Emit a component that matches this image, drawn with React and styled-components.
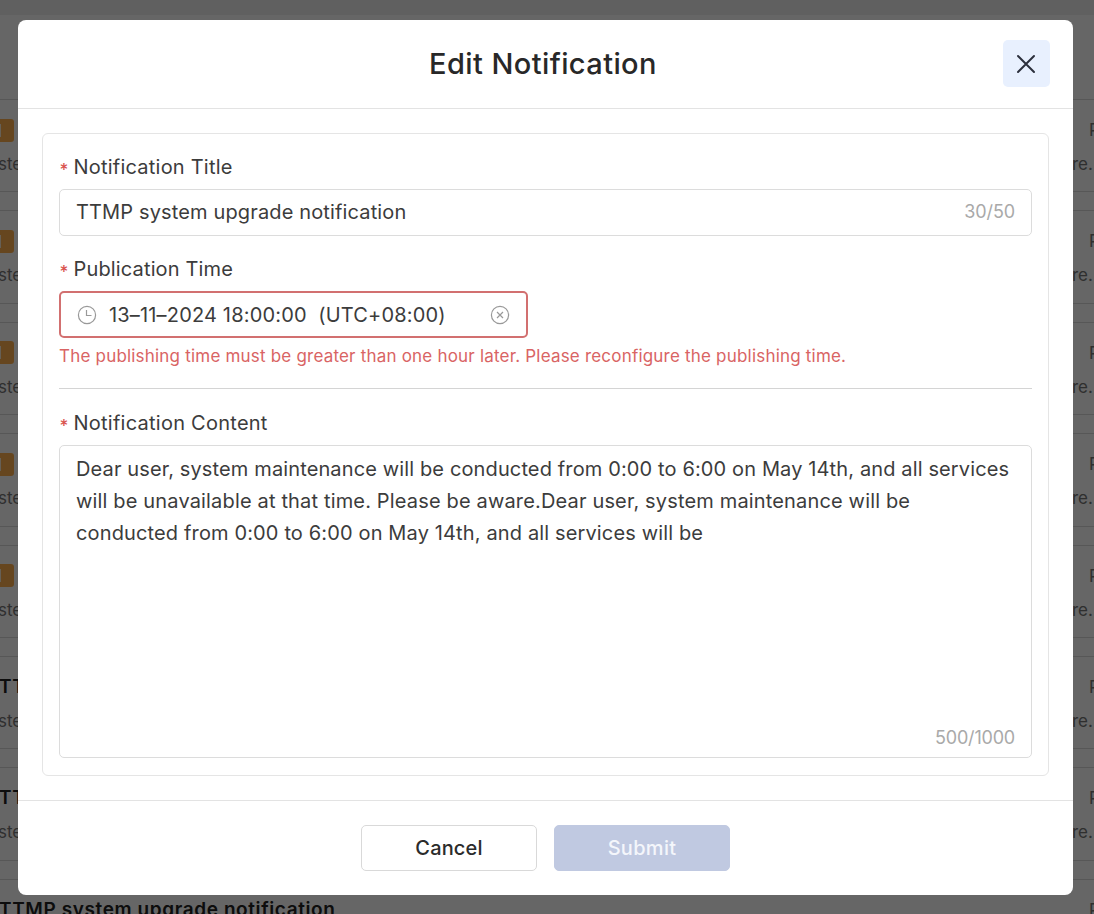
import React from "react";
import styled, { createGlobalStyle } from "styled-components";

const GlobalStyle = createGlobalStyle`
  *, *::before, *::after { box-sizing: border-box; }
  body {
    margin: 0;
    overflow: hidden;
    font-family: Inter, "Liberation Sans", sans-serif;
    font-weight: 400;
    color: #3c3c3c;
  }
  button, input, textarea { font-family: inherit; }
`;

const Page = styled.div`
  position: relative;
  width: 1094px;
  height: 914px;
  overflow: hidden;
  background: #fff;
`;

const TopBar = styled.div`
  height: 15px;
  background: #f0f0f0;
`;

const CardList = styled.div`
  display: flex;
  flex-direction: column;
  gap: 18px;
  padding-top: 84px;
`;

const Card = styled.div`
  flex: none;
  height: 93.4px;
  border-top: 1px solid #d9d9d9;
  border-bottom: 1px solid #d9d9d9;
  white-space: nowrap;
`;

const CardRow = styled.div`
  display: flex;
  justify-content: space-between;
  align-items: center;
  height: ${(p) => p.$height}px;
  margin-top: ${(p) => p.$top}px;
  font-size: 17px;
  line-height: 24px;
  color: #777;
`;

const CardTitle = styled.span`
  margin-left: -1px;
  font-size: 19px;
  font-weight: 600;
  letter-spacing: 0.6px;
  color: #222;
`;

const Badge = styled.span`
  width: 14px;
  height: 23px;
  border-radius: 0 3px 3px 0;
  background: linear-gradient(#fff0d8, #fff0d8) left center / 1px 13px no-repeat #ffb04e;
`;

const CardDetail = styled.span`
  width: ${(p) => p.$width}px;
  margin-left: ${(p) => p.$shift || 0}px;
`;

const Mask = styled.div`
  position: absolute;
  inset: 0;
  display: flex;
  align-items: flex-start;
  padding: 20px 0 0 18px;
  background: rgba(0, 0, 0, 0.6);
`;

const Dialog = styled.section`
  display: flex;
  flex-direction: column;
  width: 1055px;
  height: 875px;
  border-radius: 8px;
  background: #fff;
`;

const DialogHeader = styled.header`
  display: grid;
  grid-template-columns: 47px 1fr 47px;
  align-items: center;
  height: 89px;
  padding: 0 23px 1px;
  border-bottom: 1px solid #e3e3e3;
`;

const DialogTitle = styled.h1`
  grid-column: 2;
  margin: 1px 5px 0 0;
  text-align: center;
  font-size: 29px;
  font-weight: 500;
  line-height: 40px;
  letter-spacing: ${(p) => p.$track}px;
  color: #282828;
`;

const CloseButton = styled.button`
  display: flex;
  align-items: center;
  justify-content: center;
  width: 47px;
  height: 47px;
  padding: 0 1px 0 0;
  border: 0;
  border-radius: 5px;
  background: #e8f0fe;
`;

const DialogBody = styled.div`
  flex: 1;
  padding: 24px 24px 24px;
`;

const Panel = styled.div`
  display: flex;
  flex-direction: column;
  height: 643px;
  padding: 18px 16px 17px 16px;
  border: 1px solid #e5e5e5;
  border-radius: 6px;
`;

const Label = styled.label`
  display: flex;
  align-items: center;
  gap: 5px;
  height: 30px;
  margin-top: ${(p) => p.$top || 0}px;
  padding-left: 0.5px;
  font-size: 20px;
  letter-spacing: ${(p) => p.$track}px;
`;

const Star = styled.span`
  width: 9px;
  padding-top: 6px;
  font-size: 17px;
  font-weight: 500;
  line-height: 20px;
  letter-spacing: 0;
  color: #d9534f;
`;

const Field = styled.div`
  display: flex;
  align-items: center;
  width: ${(p) => p.$width || "100%"};
  height: 47px;
  margin-top: ${(p) => p.$top}px;
  padding: 0 16px ${(p) => (p.$error ? 0 : 1)}px;
  border: ${(p) => (p.$error ? "2px solid #d27070" : "1px solid #dcdcdc")};
  border-radius: 5px;
`;

const Value = styled.span`
  flex: 1;
  font-size: 20px;
  line-height: 30px;
  letter-spacing: ${(p) => p.$track}px;
  white-space: pre;
`;

const Count = styled.span`
  font-size: 18px;
  line-height: 24px;
  letter-spacing: ${(p) => p.$track}px;
  color: #a9a9a9;
`;

const ClockIcon = styled.svg`
  flex: none;
  margin-right: 12px;
`;

const ErrorText = styled.p`
  margin: 4px 0 0;
  font-size: 17px;
  line-height: 28px;
  letter-spacing: ${(p) => p.$track}px;
  white-space: nowrap;
  color: #d96464;
`;

const Divider = styled.hr`
  width: 100%;
  height: 1px;
  margin: 18px 0 0;
  border: 0;
  background: #d4d4d4;
`;

const TextArea = styled.div`
  display: flex;
  flex-direction: column;
  justify-content: space-between;
  height: 313px;
  margin-top: 7px;
  padding: 7px 16px 7px;
  border: 1px solid #dcdcdc;
  border-radius: 5px;
`;

const Lines = styled.div`
  font-size: 20px;
  line-height: 32.2px;
  white-space: nowrap;
`;

const Line = styled.div`
  letter-spacing: ${(p) => p.$track}px;
`;

const CountRow = styled.div`
  display: flex;
  justify-content: flex-end;
`;

const DialogFooter = styled.footer`
  display: flex;
  justify-content: center;
  gap: 17px;
  height: 95px;
  padding: 24px 0 0;
  border-top: 1px solid #e3e3e3;
`;

const Button = styled.button`
  width: 176px;
  height: 46px;
  padding: 0 0 1px;
  border: 1px solid ${(p) => (p.$primary ? "#c0c9e1" : "#d9d9d9")};
  border-radius: 5px;
  background: ${(p) => (p.$primary ? "#c0c9e1" : "#fff")};
  font-size: 20px;
  font-weight: 500;
  letter-spacing: ${(p) => p.$track}px;
  color: ${(p) => (p.$primary ? "#f4f6fb" : "#2b2b2b")};
`;

const rows = [true, true, true, true, true, false, false, false];

export default function App() {
  return (
    <>
      <GlobalStyle />
      <Page>
        <TopBar />
        <CardList>
          {rows.map((tagged, i) => (
            <Card key={i}>
              <CardRow $height={24} $top={18}>
                {tagged ? <Badge /> : <CardTitle>TTMP system upgrade notification</CardTitle>}
                <CardDetail $width={5}>P</CardDetail>
              </CardRow>
              <CardRow $height={24} $top={10}>
                <CardDetail $shift={-2}>ste</CardDetail>
                <CardDetail $width={22}>re.</CardDetail>
              </CardRow>
            </Card>
          ))}
        </CardList>
        <Mask>
          <Dialog>
            <DialogHeader>
              <DialogTitle $track={0.4}>Edit Notification</DialogTitle>
              <CloseButton aria-label="Close">
                <svg width="20" height="20" viewBox="0 0 20 20" fill="none" stroke="#2b2f3c" strokeWidth="2" strokeLinecap="round">
                  <path d="M2 2 L18 18 M18 2 L2 18" />
                </svg>
              </CloseButton>
            </DialogHeader>
            <DialogBody>
              <Panel>
                <Label $track={0.22}><Star>*</Star>Notification Title</Label>
                <Field $top={7}>
                  <Value $track={0.14}>TTMP system upgrade notification</Value>
                  <Count $track={-0.1}>30/50</Count>
                </Field>
                <Label $top={18} $track={0.15}><Star>*</Star>Publication Time</Label>
                <Field $top={7} $width="469px" $error>
                  <ClockIcon width="20" height="20" viewBox="0 0 20 20" fill="none" stroke="#999" strokeWidth="1.2">
                    <circle cx="10" cy="10" r="8.6" />
                    <path d="M9.5 5 V10.5 H14.5" />
                  </ClockIcon>
                  <Value $track={0.17}>{"13–11–2024 18:00:00  (UTC+08:00)"}</Value>
                  <svg width="20" height="20" viewBox="0 0 20 20" fill="none" stroke="#999" strokeWidth="1.2">
                    <circle cx="10" cy="10" r="8.6" />
                    <path d="M7 7 L13 13 M13 7 L7 13" />
                  </svg>
                </Field>
                <ErrorText $track={0.2}>The publishing time must be greater than one hour later. Please reconfigure the publishing time.</ErrorText>
                <Divider />
                <Label $top={19} $track={0.25}><Star>*</Star>Notification Content</Label>
                <TextArea>
                  <Lines>
                    <Line $track={0.13}>Dear user, system maintenance will be conducted from 0:00 to 6:00 on May 14th, and all services</Line>
                    <Line $track={0.16}>will be unavailable at that time. Please be aware.Dear user, system maintenance will be</Line>
                    <Line $track={0.14}>conducted from 0:00 to 6:00 on May 14th, and all services will be</Line>
                  </Lines>
                  <CountRow><Count $track={-0.2}>500/1000</Count></CountRow>
                </TextArea>
              </Panel>
            </DialogBody>
            <DialogFooter>
              <Button $track={0.15}>Cancel</Button>
              <Button $primary $track={0.3}>Submit</Button>
            </DialogFooter>
          </Dialog>
        </Mask>
      </Page>
    </>
  );
}
